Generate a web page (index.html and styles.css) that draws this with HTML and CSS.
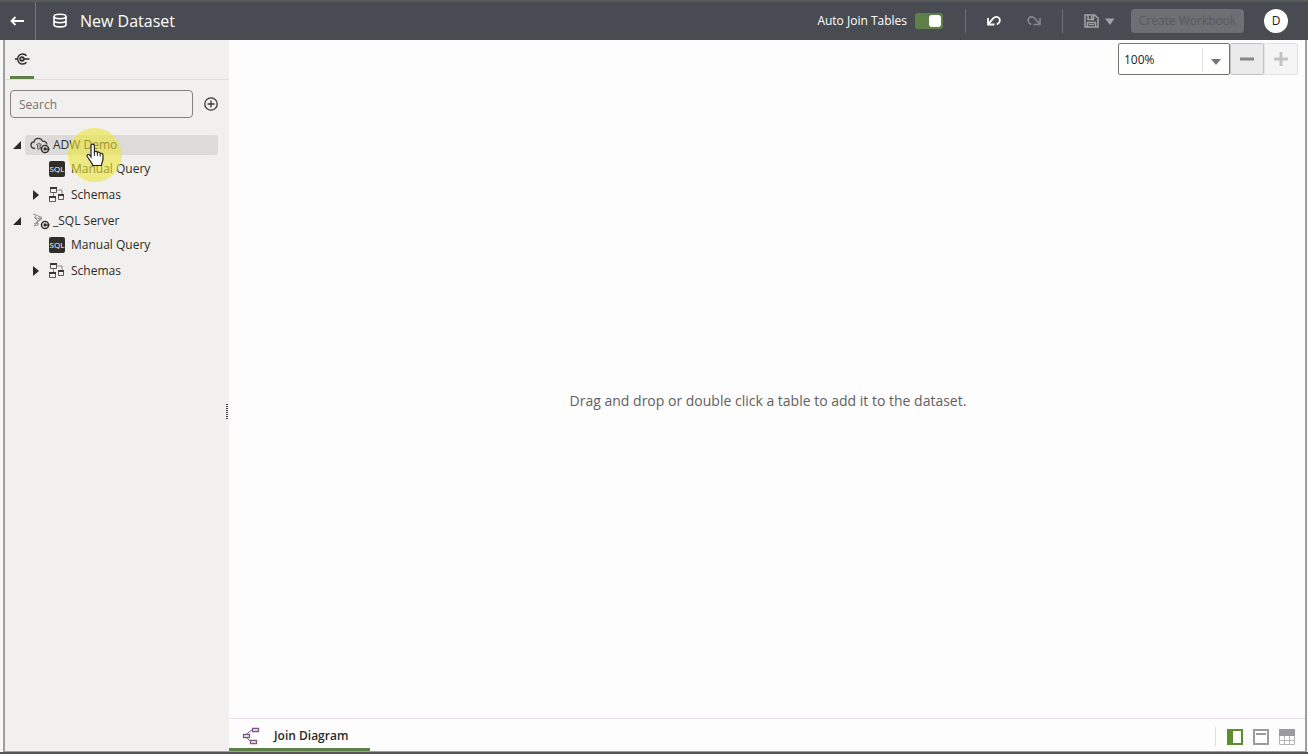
FILE: index.html
```html
<!DOCTYPE html>
<html lang="en">
<head>
<meta charset="utf-8">
<title>New Dataset</title>
<link rel="stylesheet" href="styles.css">
</head>
<body>
<svg class="defs" aria-hidden="true">
  <symbol id="schema" viewBox="0 0 18 18">
    <path d="M9.500 4h4.500v4M5.500 6v4" fill="none" stroke="#8b8784"/>
    <g fill="#f3f2f0" stroke="#5d5956"><path d="M2.500 1.500h6v5h-6zM1.500 10.500h6v5h-6zM10.500 8.500h5v5h-5z"/></g>
    <path d="M2 1h7v2H2zM1 10h7v2H1zM10 8h6v2h-6z" fill="#3a3735"/>
  </symbol>
  <symbol id="plug" viewBox="0 0 10 10">
    <circle cx="5" cy="5" r="3.600" fill="#c9c7c5" stroke="#2d2a28" stroke-width="1.400"/>
    <path d="M5 5h4.500" stroke="#2d2a28" stroke-width="1.200"/><circle cx="5" cy="5" r="1.400" fill="#2d2a28"/>
  </symbol>
</svg>
<header class="topbar">
  <button class="back" aria-label="Back">
    <svg width="16" height="16" viewBox="0 0 16 16"><path d="M15 8H2.500M6.500 4l-4 4 4 4" fill="none" stroke="#fff" stroke-width="1.800"/></svg>
  </button>
  <svg class="dbicon" width="16" height="16" viewBox="0 0 16 16" fill="none" stroke="#fff" stroke-width="1.600"><ellipse cx="8" cy="3.500" rx="6" ry="2.200"/><path d="M2 3.500v8.200c0 1.200 2.700 2.200 6 2.200s6-1 6-2.200V3.500M2 7.600c0 1.200 2.700 2.200 6 2.200s6-1 6-2.200"/></svg>
  <h1 class="title">New Dataset</h1>
  <label class="autojoin">Auto Join Tables<input class="switch" type="checkbox" checked></label>
  <span class="rule"></span>
  <button class="tool" aria-label="Undo">
    <svg width="16" height="16" viewBox="0 0 16 16"><path d="M2 5v6.500h6.500M2.300 11.200L7.200 5.400c2-2.300 5.200-1.800 6.300.2 1 1.900.1 4.500-2.700 5.900" fill="none" stroke="#fff" stroke-width="1.800"/></svg>
  </button>
  <button class="tool redo" aria-label="Redo" disabled>
    <svg width="16" height="16" viewBox="0 0 16 16"><path d="M14 5v6.500H7.500M13.700 11.200L8.800 5.400c-2-2.300-5.200-1.800-6.300.2-1 1.900-.1 4.500 2.700 5.900" fill="none" stroke="#85888c" stroke-width="1.600"/></svg>
  </button>
  <span class="rule"></span>
  <button class="tool save" aria-label="Save" disabled>
    <svg width="32" height="16" viewBox="0 0 32 16"><path d="M2 2h9.500L15 5v9H2zM5 2v4.500h5.500V2M4.500 14V9.500h8V14" fill="none" stroke="#a0a2a4" stroke-width="1.500"/><path d="M8 3h1.500v3H8zM6 11h5v1H6z" fill="#a0a2a4"/><path d="M22 5.500h9.500L27 12z" fill="#a0a2a4"/></svg>
  </button>
  <button class="create" disabled>Create Workbook</button>
  <button class="avatar">D</button>
</header>
<div class="workspace">
  <aside class="sidebar">
    <nav class="sidetabs"><button class="sidetab" aria-label="Connections">
      <svg width="16" height="16" viewBox="0 0 16 16" fill="none" stroke="#2d2a28" stroke-width="1.400"><path d="M12.500 4.800a5 5 0 1 0 0 6.400M1 8h2M10 8h5.500"/><circle cx="8" cy="8" r="2" fill="#aaa"/></svg>
    </button></nav>
    <div class="searchrow">
      <input class="search" type="text" placeholder="Search" aria-label="Search">
      <button class="add" aria-label="Add connection"><svg width="16" height="16" viewBox="0 0 16 16" fill="none" stroke="#3a3735" stroke-width="1.300"><circle cx="8" cy="8" r="6.200"/><path d="M8 4.500v7M4.500 8h7"/></svg></button>
    </div>
    <ul class="tree">
      <li>
        <div class="node">
          <svg class="twist" width="8" height="8" viewBox="0 0 8 8"><path d="M8 0v8H0z" fill="#2d2a28"/></svg>
          <span class="label selected">
            <svg class="source" width="20" height="18" viewBox="0 0 20 18"><path d="M5 12.500C2.500 12.300 1 11 1 9c0-1.900 1.300-3 3-3 .5-2.300 2.200-3.700 4.300-3.700 2 0 3.400 1 4.100 2.800 2.500-.1 4.300 1.300 4.600 3.400" fill="none" stroke="#3a3735" stroke-width="1.300"/><path d="M6 9l3-2 3 2M7.500 9v4h3V9" fill="#aaa" stroke="#77736f"/><use href="#plug" x="10" y="8" width="10" height="10"/></svg>
            <span>ADW Demo</span>
          </span>
        </div>
        <ul class="branch">
          <li class="query"><span class="sql">SQL</span><span>Manual Query</span></li>
          <li class="schemas"><svg class="closed" width="8" height="10" viewBox="0 0 8 10"><path d="M1 0l6 5-6 5z" fill="#2d2a28"/></svg><svg width="18" height="18"><use href="#schema"/></svg><span>Schemas</span></li>
        </ul>
      </li>
      <li>
        <div class="node">
          <svg class="twist" width="8" height="8" viewBox="0 0 8 8"><path d="M8 0v8H0z" fill="#2d2a28"/></svg>
          <span class="label">
            <svg class="source" width="20" height="18" viewBox="0 0 20 18"><path d="M3 2l4 1.500 5 2-3 2.500-5 6M6 3l-1 3 6 1M4 5l4 4-4 3M9 5l3 2-5 3 1 3-4 1M6 11l3 1" fill="none" stroke="#99958f"/><use href="#plug" x="10" y="8" width="10" height="10"/></svg>
            <span>_SQL Server</span>
          </span>
        </div>
        <ul class="branch">
          <li class="query"><span class="sql">SQL</span><span>Manual Query</span></li>
          <li class="schemas"><svg class="closed" width="8" height="10" viewBox="0 0 8 10"><path d="M1 0l6 5-6 5z" fill="#2d2a28"/></svg><svg width="18" height="18"><use href="#schema"/></svg><span>Schemas</span></li>
        </ul>
      </li>
    </ul>
    <span class="grip"></span>
    <div class="pointer">
      <svg width="18" height="24" viewBox="0 0 18 24"><path d="M5 14V3c0-2.400 3.400-2.400 3.400 0v6c.8-1 2.700-.7 3 .5 1-.8 2.700-.3 2.800 1 1.200-.6 2.800.1 2.800 1.600V16c0 2-1.300 3-1.500 6.500H6.800C6 19.500 3.500 17 1.500 14c-1.200-1.900 1-3.400 2.200-1.800z" fill="#fff" stroke="#222" stroke-width="1.200"/><path d="M8.400 9v4M11.400 10v3M14.200 11v2.500" stroke="#222"/></svg>
    </div>
  </aside>
  <main class="main">
    <section class="canvas">
      <div class="zoom">
        <div class="zoombox">
          <select class="zoomselect" aria-label="Zoom"><option>100%</option></select>
          <span class="zoomarrow"></span>
        </div>
        <button class="zoombtn" aria-label="Zoom out"><svg width="14" height="14"><path d="M0 7h14" stroke="#8b8784" stroke-width="3"/></svg></button>
        <button class="zoombtn off" aria-label="Zoom in" disabled><svg width="14" height="14"><path d="M0 7h14M7 0v14" stroke="#c4c3c2" stroke-width="3"/></svg></button>
      </div>
      <p class="hint">Drag and drop or double click a table to add it to the dataset.</p>
    </section>
    <footer class="footer">
      <button class="jointab">
        <svg width="18" height="18" viewBox="0 0 18 18" fill="none" stroke="#7d5a86"><path d="M10.500 1.500h6v3h-6zM1.500 7.500h6v3h-6zM8.500 13.500h6v3h-6z" stroke-width="1.300"/><path d="M5 7L7.500 4.500 10 3M5 11l3.500 3.500"/></svg>
        <span>Join Diagram</span>
      </button>
      <div class="views">
        <button aria-label="Show data panel"><svg width="16" height="16"><rect x="1" y="1" width="14" height="14" fill="#fff" stroke="#5b8f2d" stroke-width="2"/><path d="M0 0h6v16H0z" fill="#5b8f2d"/></svg></button>
        <button aria-label="Show header"><svg width="16" height="16"><rect x="1" y="1" width="14" height="14" fill="#fff" stroke="#9b9b9d" stroke-width="2"/><path d="M3 5h10" stroke="#9b9b9d" stroke-width="2"/></svg></button>
        <button aria-label="Show table"><svg width="16" height="16"><path d="M0 0h16v7H0z" fill="#9b9b9d"/><path d="M.5 7v8.500h15V7M0 11.500h16M5.500 7v9M10.500 7v9" fill="none" stroke="#b5b5b5"/></svg></button>
      </div>
    </footer>
  </main>
</div>
</body>
</html>
```
FILE: styles.css
```css
* { box-sizing: border-box; }
body {
  margin: 0;
  height: 100vh;
  display: flex;
  flex-direction: column;
  overflow: hidden;
  background: #f7f7f7;
  color: #2d2a28;
  font: 12px/16px "Open Sans", "Noto Sans", sans-serif;
  border-bottom: 2px solid #555;
}
ul { list-style: none; margin: 0; padding: 0; }
button { border: 0; padding: 0; margin: 0; background: none; font: inherit; color: inherit; }
svg { display: block; flex: none; }
.defs { position: absolute; width: 0; height: 0; }

.topbar {
  flex: none;
  height: 40px;
  display: flex;
  align-items: center;
  padding-right: 20px;
  border-top: 2px solid #565c5a;
  background: #484b51;
  color: #fff;
}
.back { height: 38px; width: 36px; padding-left: 9px; border-right: 1px solid #74777b; }
.dbicon { margin-left: 16px; }
.title { margin: 0 auto 0 12px; font-size: 16px; line-height: 24px; font-weight: 400; }
.autojoin { display: flex; align-items: center; gap: 8px; }
.switch {
  appearance: none;
  margin: 0;
  width: 28px;
  height: 16px;
  padding: 2px;
  border-radius: 3px;
  background: #5c8048;
  display: flex;
  justify-content: flex-end;
}
.switch::before { content: ""; width: 12px; height: 12px; border-radius: 3px; background: #fff; }
.rule { width: 1px; height: 24px; background: #6c6f73; }
.autojoin + .rule { margin-left: 22px; }
.tool { margin-left: 20px; }
.redo { margin-left: 24px; margin-right: 20px; }
.create {
  width: 113px;
  height: 24px;
  margin: 0 20px 0 16px;
  border-radius: 4px;
  background: #6c6f73;
  color: #565a5e;
}
.avatar { width: 24px; height: 24px; border-radius: 50%; background: #fff; color: #222; }

.workspace {
  flex: 1;
  min-height: 0;
  display: flex;
  margin: 0 1px 0 3px;
  border: solid #9b9f9d;
  border-width: 0 2px 1px;
}
.sidebar { position: relative; width: 224px; flex: none; background: #f1f0ee; }
.sidetabs { height: 40px; padding-left: 5px; border-bottom: 1px solid #dcdedb; }
.sidetab { width: 24px; height: 39px; padding: 1px 4px 0; border-bottom: 3px solid #5c8048; }
.searchrow { display: flex; align-items: center; gap: 10px; padding: 10px 10px 0 5px; }
.search {
  flex: 1;
  min-width: 0;
  height: 28px;
  padding: 0 8px;
  border: 1px solid #85827f;
  border-radius: 4px;
  background: transparent;
  font: inherit;
}
.search::placeholder { color: #77736f; opacity: 1; }
.tree { padding: 15px 11px 0 8px; }
.node { display: flex; align-items: center; gap: 4px; height: 24px; }
.label { flex: 1; display: flex; align-items: center; gap: 3px; height: 20px; padding-left: 5px; border-radius: 3px; }
.selected { background: #dddbda; }
.query, .schemas { display: flex; align-items: center; }
.query { height: 24px; padding-left: 36px; gap: 6px; }
.schemas { height: 28px; padding-left: 19px; }
.closed { margin-right: 8px; }
.schemas span { margin-left: 5px; }
.sql {
  width: 16px;
  height: 16px;
  border-radius: 2px;
  background: #312d2a;
  color: #fff;
  font: 8px/16px "Open Sans", "Noto Sans", sans-serif;
  text-align: center;
}
.grip {
  position: absolute;
  right: 1px;
  top: 50%;
  width: 2px;
  height: 15px;
  margin-top: 8px;
  background: repeating-linear-gradient(#4a3a4a 0 1px, transparent 1px 2px);
}
.pointer {
  position: absolute;
  left: 63px;
  top: 88px;
  width: 54px;
  height: 54px;
  padding: 15px 0 0 18px;
  border-radius: 50%;
  background: rgba(236, 229, 50, .58);
}

.main { flex: 1; min-width: 0; display: flex; flex-direction: column; background: #fdfdfd; }
.canvas { position: relative; flex: 1; display: flex; align-items: center; justify-content: center; }
.hint { margin: 0; padding-top: 44px; padding-left: 2px; font-size: 14px; line-height: 20px; color: #63605d; }
.zoom { position: absolute; right: 7px; top: 3px; display: flex; }
.zoombox { position: relative; }
.zoomselect {
  appearance: none;
  width: 112px;
  height: 32px;
  padding: 2px 5px 0;
  border: 1px solid #77736f;
  border-radius: 2px;
  background: #fff;
  color: #222;
  font: inherit;
}
.zoomarrow {
  position: absolute;
  right: 1px;
  top: 5px;
  width: 27px;
  height: 24px;
  border-left: 1px solid #e4e2e0;
  pointer-events: none;
}
.zoomarrow::after {
  content: "";
  position: absolute;
  left: 8px;
  top: 11px;
  border: 5px solid transparent;
  border-top: 6px solid #77736f;
  border-bottom: 0;
}
.zoombtn {
  width: 34px;
  height: 32px;
  display: flex;
  align-items: center;
  justify-content: center;
  border: 1px solid #c4c3c2;
  border-radius: 2px;
  background: #ebebeb;
}
.off { border-color: #e4e2e0; background: #f5f5f5; }
.footer {
  height: 33px;
  flex: none;
  display: flex;
  justify-content: space-between;
  border-top: 1px solid #e9dce9;
}
.jointab {
  width: 141px;
  display: flex;
  align-items: center;
  gap: 14px;
  padding: 4px 0 0 13px;
  border-bottom: 3px solid #5c8048;
  font-weight: 600;
}
.views { display: flex; align-items: center; gap: 10px; margin: 8px 10px 5px 0; padding-left: 11px; border-left: 1px solid #dedede; }
```
